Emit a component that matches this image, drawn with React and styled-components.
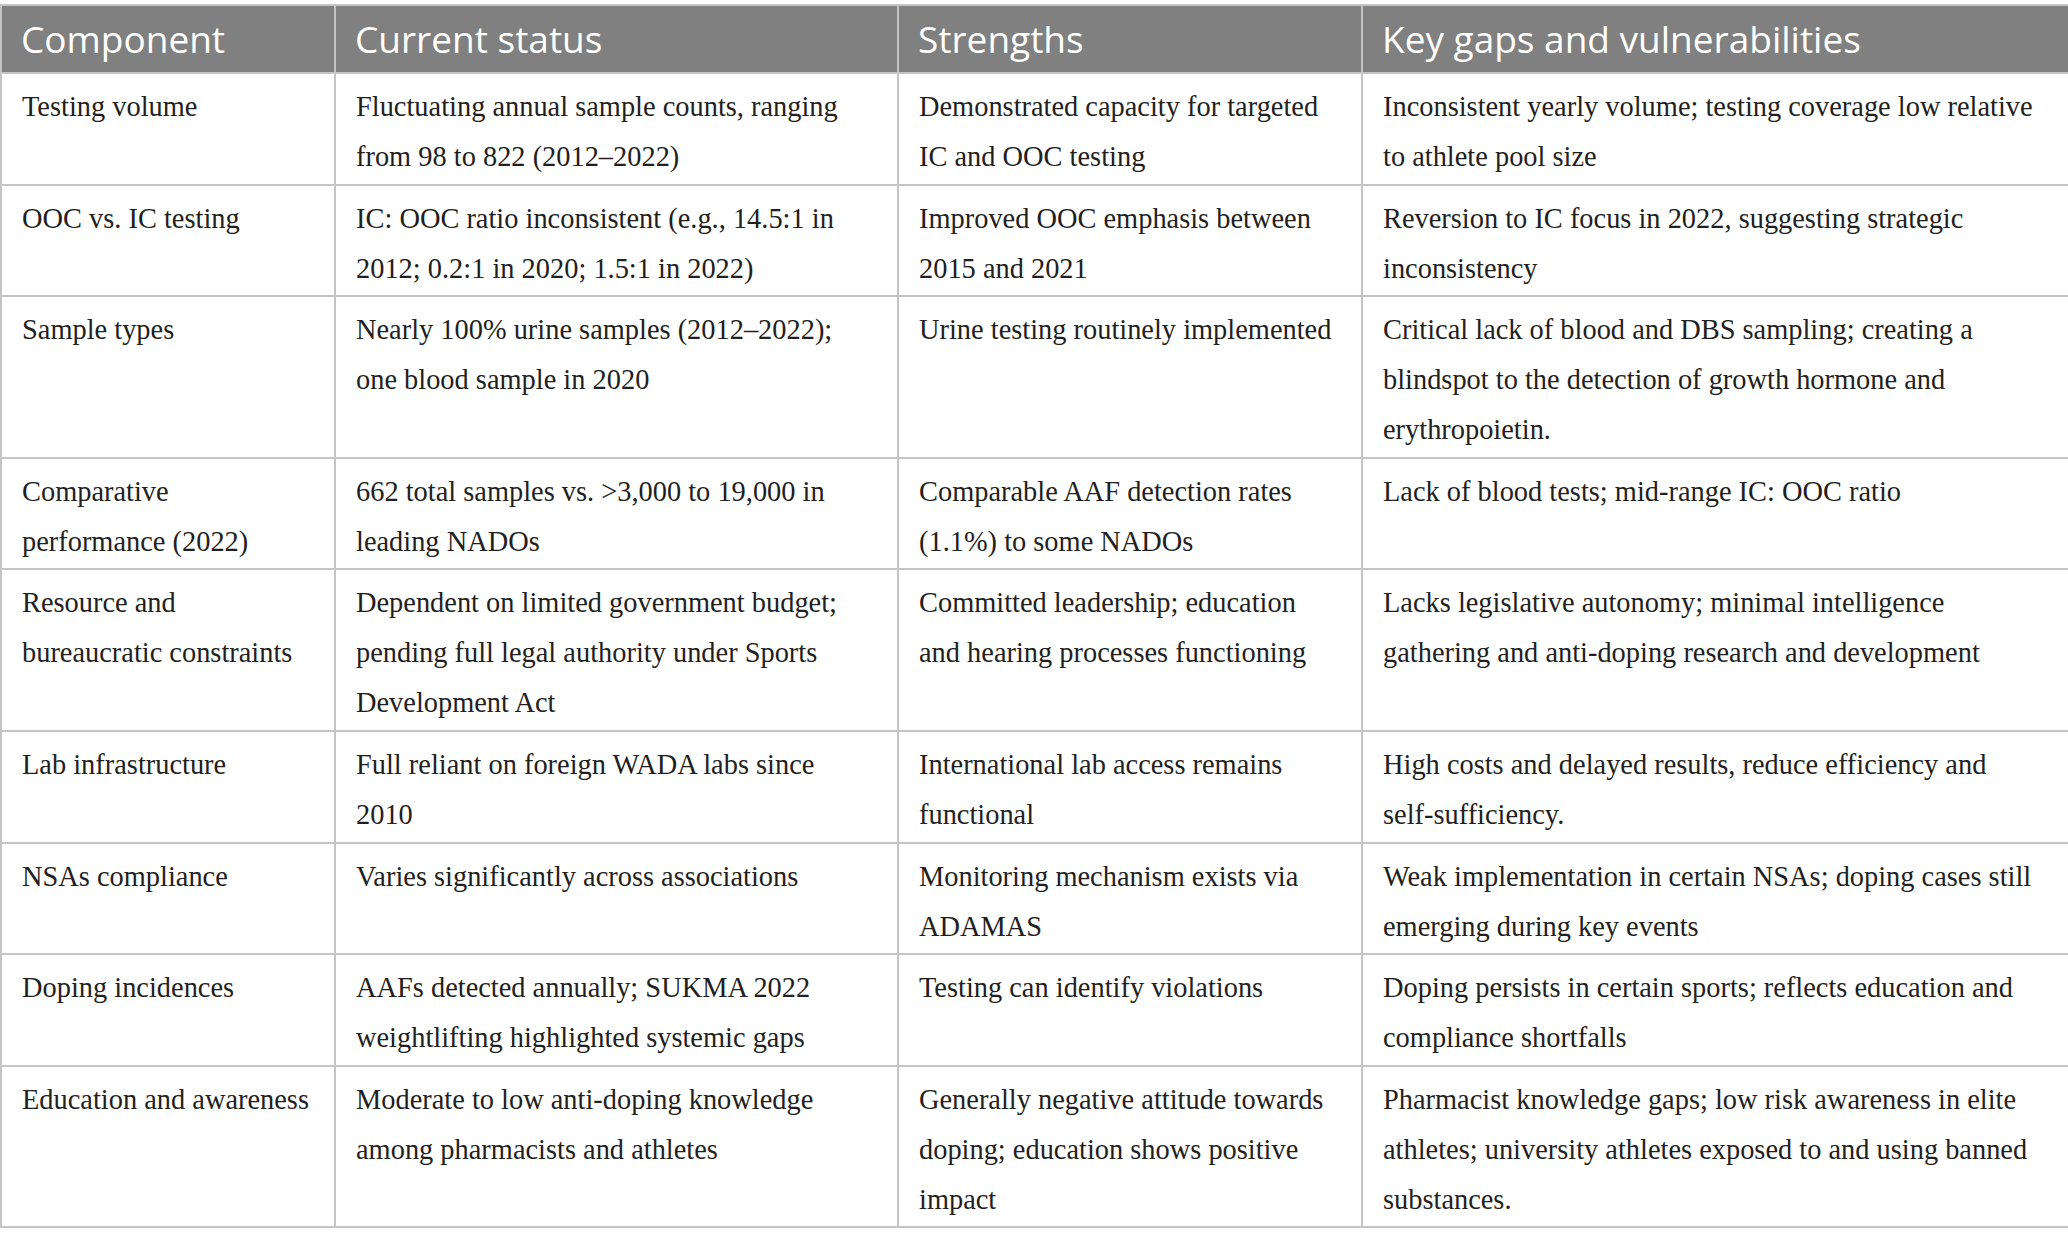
import React from "react";
import styled, { createGlobalStyle } from "styled-components";

const GlobalStyle = createGlobalStyle`
  html, body {
    margin: 0;
    padding: 0;
    background: #ffffff;
  }
`;

const Page = styled.div`
  padding-top: 4px;
  width: 2068px;
`;

const Table = styled.table`
  width: 2068px;
  table-layout: fixed;
  border-collapse: collapse;
  border: 2px solid #c4c4c4;
`;

const HeadCell = styled.th`
  background: #808080;
  color: #ffffff;
  font-family: "Open Sans", "Noto Sans", sans-serif;
  font-weight: 400;
  font-size: 37px;
  line-height: 52px;
  text-align: left;
  padding: 7px 20px 7px 19px;
  border: 2px solid #c4c4c4;
`;

const Cell = styled.td`
  vertical-align: top;
  font-family: "Liberation Serif", "Times New Roman", serif;
  font-size: 28.4px;
  line-height: 50px;
  color: #231f20;
  padding: 8px 20px 1.6px 20px;
  border: 2px solid #c4c4c4;
`;

const Line = styled.span`
  display: block;
  white-space: nowrap;
`;

const columns = [
  { title: "Component", width: 334 },
  { title: "Current status", width: 563 },
  { title: "Strengths", width: 464 },
  { title: "Key gaps and vulnerabilities", width: 707 },
];

const rows = [
  [
    ["Testing volume"],
    ["Fluctuating annual sample counts, ranging", "from 98 to 822 (2012–2022)"],
    ["Demonstrated capacity for targeted", "IC and OOC testing"],
    ["Inconsistent yearly volume; testing coverage low relative", "to athlete pool size"],
  ],
  [
    ["OOC vs. IC testing"],
    ["IC: OOC ratio inconsistent (e.g., 14.5:1 in", "2012; 0.2:1 in 2020; 1.5:1 in 2022)"],
    ["Improved OOC emphasis between", "2015 and 2021"],
    ["Reversion to IC focus in 2022, suggesting strategic", "inconsistency"],
  ],
  [
    ["Sample types"],
    ["Nearly 100% urine samples (2012–2022);", "one blood sample in 2020"],
    ["Urine testing routinely implemented"],
    [
      "Critical lack of blood and DBS sampling; creating a",
      "blindspot to the detection of growth hormone and",
      "erythropoietin.",
    ],
  ],
  [
    ["Comparative", "performance (2022)"],
    ["662 total samples vs. >3,000 to 19,000 in", "leading NADOs"],
    ["Comparable AAF detection rates", "(1.1%) to some NADOs"],
    ["Lack of blood tests; mid-range IC: OOC ratio"],
  ],
  [
    ["Resource and", "bureaucratic constraints"],
    [
      "Dependent on limited government budget;",
      "pending full legal authority under Sports",
      "Development Act",
    ],
    ["Committed leadership; education", "and hearing processes functioning"],
    [
      "Lacks legislative autonomy; minimal intelligence",
      "gathering and anti-doping research and development",
    ],
  ],
  [
    ["Lab infrastructure"],
    ["Full reliant on foreign WADA labs since", "2010"],
    ["International lab access remains", "functional"],
    ["High costs and delayed results, reduce efficiency and", "self-sufficiency."],
  ],
  [
    ["NSAs compliance"],
    ["Varies significantly across associations"],
    ["Monitoring mechanism exists via", "ADAMAS"],
    ["Weak implementation in certain NSAs; doping cases still", "emerging during key events"],
  ],
  [
    ["Doping incidences"],
    ["AAFs detected annually; SUKMA 2022", "weightlifting highlighted systemic gaps"],
    ["Testing can identify violations"],
    ["Doping persists in certain sports; reflects education and", "compliance shortfalls"],
  ],
  [
    ["Education and awareness"],
    ["Moderate to low anti-doping knowledge", "among pharmacists and athletes"],
    ["Generally negative attitude towards", "doping; education shows positive", "impact"],
    [
      "Pharmacist knowledge gaps; low risk awareness in elite",
      "athletes; university athletes exposed to and using banned",
      "substances.",
    ],
  ],
];

const App = () => {
  return (
    <Page>
      <GlobalStyle />
      <Table>
        <colgroup>
          {columns.map((c) => (
            <col key={c.title} style={{ width: c.width }} />
          ))}
        </colgroup>
        <thead>
          <tr>
            {columns.map((c) => (
              <HeadCell key={c.title}>{c.title}</HeadCell>
            ))}
          </tr>
        </thead>
        <tbody>
          {rows.map((row, i) => (
            <tr key={i}>
              {row.map((lines, j) => (
                <Cell key={j}>
                  {lines.map((l) => (
                    <Line key={l}>{l}</Line>
                  ))}
                </Cell>
              ))}
            </tr>
          ))}
        </tbody>
      </Table>
    </Page>
  );
};

export default App;
